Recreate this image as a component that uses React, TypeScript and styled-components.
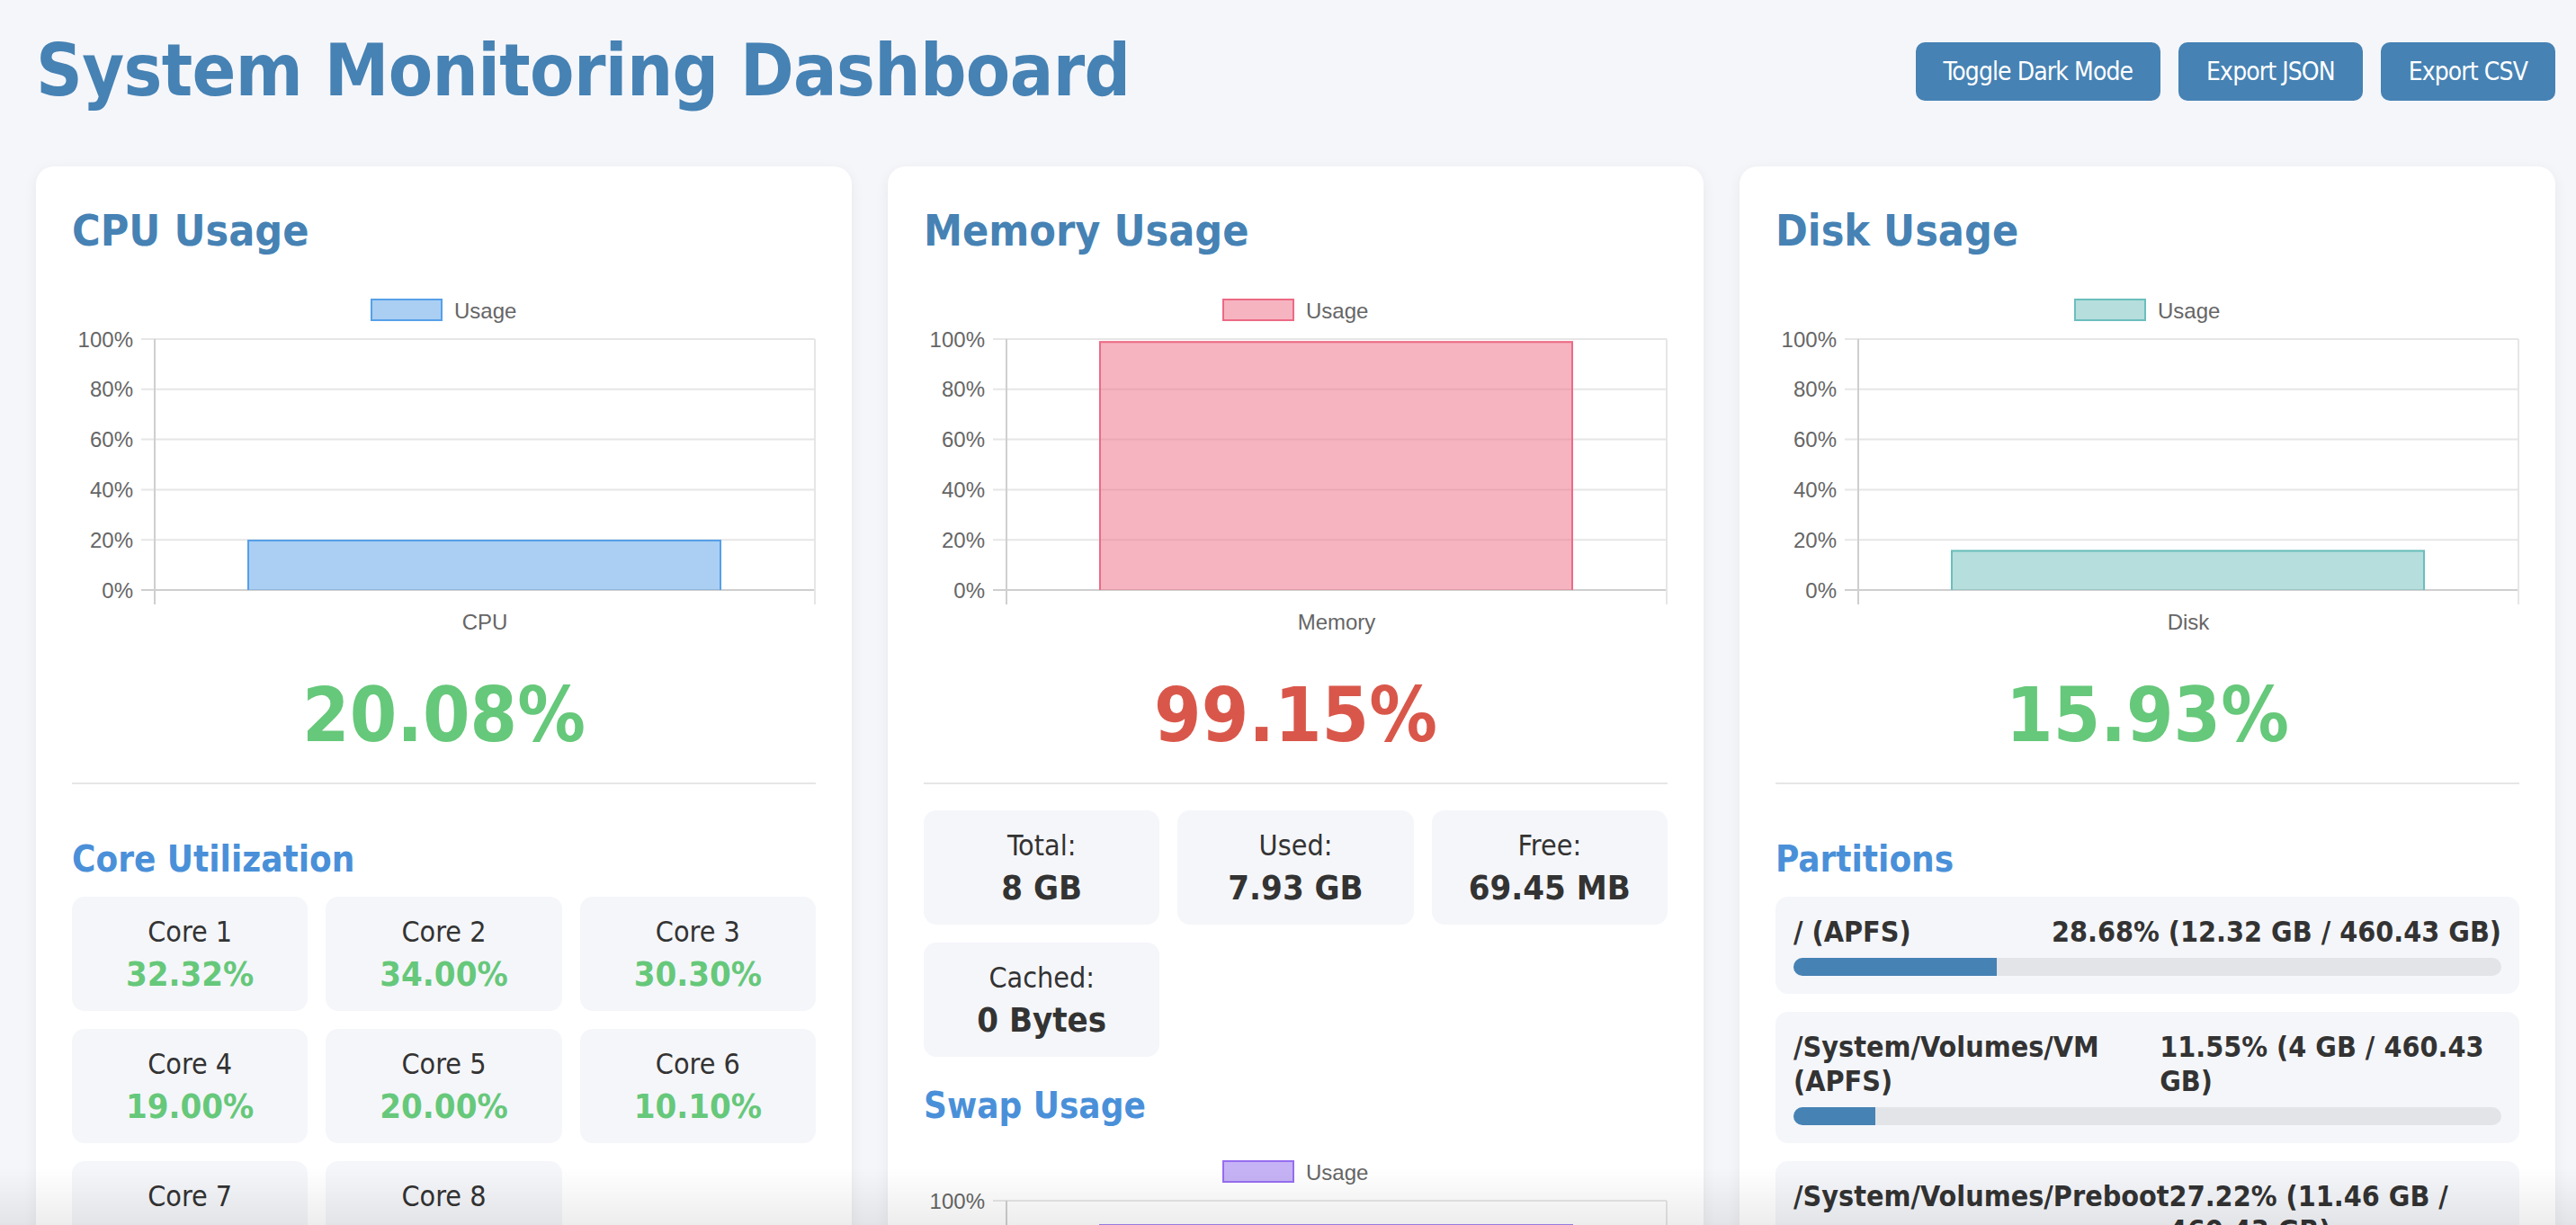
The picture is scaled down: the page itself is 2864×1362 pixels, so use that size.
import React from "react";
import styled, { createGlobalStyle } from "styled-components";

const UI_FONT = `"DejaVu Sans Condensed", "DejaVu Sans", Verdana, sans-serif`;
const CHART_FONT = `"Liberation Sans", Arial, Helvetica, sans-serif`;

const GREEN = "#66c87a";
const RED = "#d9574a";

const GlobalStyle = createGlobalStyle`
  * { box-sizing: border-box; }
  html, body { margin: 0; padding: 0; background: #f5f6fa; }
  body { font-family: ${UI_FONT}; color: #333; }
`;

const Page = styled.div`
  padding: 31px 23px 80px 40px;
`;

const Header = styled.header`
  display: flex;
  justify-content: space-between;
  align-items: center;
  margin-bottom: 58px;
`;

const Title = styled.h1`
  margin: 0;
  font-size: 80px;
  line-height: 96px;
  font-weight: bold;
  letter-spacing: -0.6px;
  color: #4682b4;
`;

const Actions = styled.div`
  display: flex;
  gap: 20px;
`;

const ActionButton = styled.button`
  font-family: ${UI_FONT};
  font-size: 28px;
  line-height: 33px;
  letter-spacing: -0.9px;
  color: #fff;
  background: #4682b4;
  border: none;
  border-radius: 10px;
  padding: 16px 31px;
  cursor: pointer;
`;

const Columns = styled.main`
  display: grid;
  grid-template-columns: repeat(3, minmax(0, 1fr));
  gap: 40px;
  align-items: start;
`;

const Card = styled.section`
  display: flex;
  flex-direction: column;
  background: #fff;
  border-radius: 20px;
  padding: 40px;
  box-shadow: 0 4px 16px rgba(0, 0, 0, 0.06);
`;

const CardTitle = styled.h2`
  margin: 2px 0 15px;
  font-size: 48px;
  line-height: 58px;
  font-weight: bold;
  color: #4682b4;
`;

const SubTitle = styled.h3`
  margin: 30px 0 18px;
  font-size: 40px;
  line-height: 48px;
  font-weight: bold;
  color: #4a90d9;
`;

const Metric = styled.div`
  padding: 37px 0 25px;
  border-bottom: 2px solid #e6e6e6;
  margin-bottom: 29px;
`;

const BigValue = styled.div<{ $color: string }>`
  text-align: center;
  font-size: 84px;
  line-height: 100px;
  font-weight: bold;
  color: ${(p) => p.$color};
`;

const TileGrid = styled.div`
  display: grid;
  grid-template-columns: repeat(3, minmax(0, 1fr));
  gap: 20px;
`;

const Tile = styled.div`
  background: #f5f6fa;
  border-radius: 14px;
  padding: 20px 10px 18px;
  text-align: center;
`;

const TileLabel = styled.div`
  font-size: 32px;
  line-height: 38px;
  color: #333;
`;

const TileValue = styled.div<{ $color: string }>`
  margin-top: 5px;
  font-size: 38px;
  line-height: 46px;
  font-weight: bold;
  color: ${(p) => p.$color};
`;

const PartitionList = styled.div`
  display: flex;
  flex-direction: column;
  gap: 20px;
`;

const PartitionItem = styled.div`
  background: #f5f6fa;
  border-radius: 14px;
  padding: 20px;
`;

const PartitionHead = styled.div`
  display: flex;
  justify-content: space-between;
  font-size: 32px;
  line-height: 38px;
  font-weight: bold;
  color: #333;
`;

const ProgressTrack = styled.div`
  margin-top: 10px;
  height: 20px;
  border-radius: 10px;
  background: #e2e4e8;
  overflow: hidden;
`;

const ProgressFill = styled.div`
  height: 100%;
  background: #4682b4;
`;

const ChartSvg = styled.svg`
  display: block;
  width: 100%;
  font-family: ${CHART_FONT};
`;

const BottomFade = styled.div`
  position: fixed;
  left: 0;
  right: 0;
  bottom: 0;
  height: 64px;
  pointer-events: none;
  background: linear-gradient(to bottom, rgba(0, 0, 0, 0), rgba(0, 0, 0, 0.07));
`;

type ChartProps = {
  label: string;
  value: number;
  fill: string;
  stroke: string;
  legendTop?: number;
};

function BarChart({ label, value, fill, stroke, legendTop = 32 }: ChartProps) {
  const W = 827;
  const gridTop = legendTop + 45;
  const step = 55.8;
  const gridBottom = gridTop + step * 5;
  const axisX = 92;
  const right = 826;
  const tickStart = 77;
  const H = gridBottom + 52;
  const barL = 195;
  const barR = 722;
  const barTop = gridBottom - (value / 100) * (gridBottom - gridTop);
  const ticks = [100, 80, 60, 40, 20, 0];
  return (
    <ChartSvg viewBox={`0 0 ${W} ${H}`} height={H}>
      <rect x={333} y={legendTop + 1} width={78} height={23} fill={fill} stroke={stroke} strokeWidth={2} />
      <text x={425} y={legendTop + 13} fontSize={24} fill="#666" dominantBaseline="central">
        Usage
      </text>
      {ticks.map((t, i) => {
        const y = gridTop + i * step;
        const isZero = t === 0;
        return (
          <g key={t}>
            <line
              x1={tickStart}
              x2={right}
              y1={y}
              y2={y}
              stroke={isZero ? "#cfcfcf" : "#e6e6e6"}
              strokeWidth={2}
            />
            <text x={68} y={y} fontSize={24} fill="#666" textAnchor="end" dominantBaseline="central">
              {t}%
            </text>
          </g>
        );
      })}
      <line x1={axisX} x2={axisX} y1={gridTop} y2={gridBottom + 16} stroke="#cfcfcf" strokeWidth={2} />
      <line x1={right} x2={right} y1={gridTop} y2={gridBottom + 16} stroke="#e6e6e6" strokeWidth={2} />
      <rect x={barL} y={barTop} width={barR - barL} height={gridBottom - barTop} fill={fill} />
      <path
        d={`M${barL + 1} ${gridBottom} V${barTop + 1} H${barR - 1} V${gridBottom}`}
        fill="none"
        stroke={stroke}
        strokeWidth={2}
      />
      <text
        x={(axisX + right) / 2}
        y={gridBottom + 35}
        fontSize={24}
        fill="#666"
        textAnchor="middle"
        dominantBaseline="central"
      >
        {label}
      </text>
    </ChartSvg>
  );
}

const cores = [32.32, 34.0, 30.3, 19.0, 20.0, 10.1, 15.0, 12.12];

const memoryStats = [
  { label: "Total:", value: "8 GB" },
  { label: "Used:", value: "7.93 GB" },
  { label: "Free:", value: "69.45 MB" },
  { label: "Cached:", value: "0 Bytes" },
];

const partitions = [
  { name: "/ (APFS)", pct: 28.68, detail: "28.68% (12.32 GB / 460.43 GB)" },
  { name: "/System/Volumes/VM (APFS)", pct: 11.55, detail: "11.55% (4 GB / 460.43 GB)" },
  { name: "/System/Volumes/Preboot", pct: 27.22, detail: "27.22% (11.46 GB / 460.43 GB)" },
  { name: "/System/Volumes/Update (APFS)", pct: 27.22, detail: "27.22% (0.01 GB / 460.43 GB)" },
  { name: "/System/Volumes/Data (APFS)", pct: 62.4, detail: "62.40% (287.31 GB / 460.43 GB)" },
];

const colorFor = (v: number) => (v > 80 ? RED : GREEN);

export default function App() {
  return (
    <>
      <GlobalStyle />
      <Page>
        <Header>
          <Title>System Monitoring Dashboard</Title>
          <Actions>
            <ActionButton>Toggle Dark Mode</ActionButton>
            <ActionButton>Export JSON</ActionButton>
            <ActionButton>Export CSV</ActionButton>
          </Actions>
        </Header>
        <Columns>
          <Card>
            <CardTitle>CPU Usage</CardTitle>
            <BarChart label="CPU" value={20.08} fill="rgba(86,160,232,0.5)" stroke="rgb(86,160,232)" />
            <Metric>
              <BigValue $color={GREEN}>20.08%</BigValue>
            </Metric>
            <SubTitle>Core Utilization</SubTitle>
            <TileGrid>
              {cores.map((c, i) => (
                <Tile key={i}>
                  <TileLabel>Core {i + 1}</TileLabel>
                  <TileValue $color={colorFor(c)}>{c.toFixed(2)}%</TileValue>
                </Tile>
              ))}
            </TileGrid>
          </Card>

          <Card>
            <CardTitle>Memory Usage</CardTitle>
            <BarChart label="Memory" value={99.15} fill="rgba(238,105,131,0.5)" stroke="rgb(236,106,132)" />
            <Metric>
              <BigValue $color={RED}>99.15%</BigValue>
            </Metric>
            <TileGrid>
              {memoryStats.map((s) => (
                <Tile key={s.label}>
                  <TileLabel>{s.label}</TileLabel>
                  <TileValue $color="#333">{s.value}</TileValue>
                </Tile>
              ))}
            </TileGrid>
            <SubTitle>Swap Usage</SubTitle>
            <BarChart
              label="Swap"
              value={90.6}
              fill="rgba(141,103,236,0.5)"
              stroke="rgb(150,110,240)"
              legendTop={19}
            />
            <Metric>
              <BigValue $color={RED}>90.60%</BigValue>
            </Metric>
          </Card>

          <Card>
            <CardTitle>Disk Usage</CardTitle>
            <BarChart label="Disk" value={15.93} fill="rgba(107,190,188,0.5)" stroke="rgb(107,190,188)" />
            <Metric>
              <BigValue $color={GREEN}>15.93%</BigValue>
            </Metric>
            <SubTitle>Partitions</SubTitle>
            <PartitionList>
              {partitions.map((p) => (
                <PartitionItem key={p.name}>
                  <PartitionHead>
                    <span>{p.name}</span>
                    <span>{p.detail}</span>
                  </PartitionHead>
                  <ProgressTrack>
                    <ProgressFill style={{ width: `${p.pct}%` }} />
                  </ProgressTrack>
                </PartitionItem>
              ))}
            </PartitionList>
          </Card>
        </Columns>
      </Page>
      <BottomFade />
    </>
  );
}
